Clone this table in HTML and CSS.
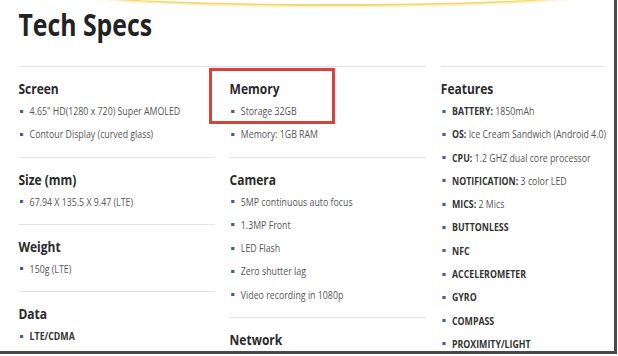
FILE: index.html
```html
<!DOCTYPE html>
<html lang="en">
<head>
    <meta charset="UTF-8">
    <meta name="viewport" content="width=device-width, initial-scale=1.0">
    <title>Tech Specs</title>
    <link rel="stylesheet" href="styles.css">
</head>
<body>

    <div class="frame">
        <!-- Reflejo amarillo de arriba -->
        <div class="glow"></div>

        <div class="page">
            <h1 class="title">Tech Specs</h1>

            <div class="specs">
                <div class="pair">
                    <div class="col">
                        <section class="spec">
                            <h2>Screen</h2>
                            <ul>
                                <li>4.65" HD(1280 x 720) Super AMOLED</li>
                                <li>Contour Display (curved glass)</li>
                            </ul>
                        </section>
                        <section class="spec">
                            <h2>Size (mm)</h2>
                            <ul>
                                <li>67.94 X 135.5 X 9.47 (LTE)</li>
                            </ul>
                        </section>
                        <section class="spec">
                            <h2>Weight</h2>
                            <ul>
                                <li>150g (LTE)</li>
                            </ul>
                        </section>
                        <section class="spec">
                            <h2>Data</h2>
                            <ul>
                                <li><strong>LTE/CDMA</strong></li>
                            </ul>
                        </section>
                    </div>

                    <div class="col">
                        <section class="spec">
                            <h2>Memory</h2>
                            <ul>
                                <li>Storage 32GB</li>
                                <li>Memory: 1GB RAM</li>
                            </ul>
                        </section>
                        <section class="spec">
                            <h2>Camera</h2>
                            <ul>
                                <li>5MP continuous auto focus</li>
                                <li>1.3MP Front</li>
                                <li>LED Flash</li>
                                <li>Zero shutter lag</li>
                                <li>Video recording in 1080p</li>
                            </ul>
                        </section>
                        <section class="spec">
                            <h2>Network</h2>
                        </section>
                    </div>
                </div>

                <div class="col features">
                    <section class="spec">
                        <h2>Features</h2>
                        <ul>
                            <li><strong>BATTERY:</strong> 1850mAh</li>
                            <li><strong>OS:</strong> Ice Cream Sandwich (Android 4.0)</li>
                            <li><strong>CPU:</strong> 1.2 GHZ dual core processor</li>
                            <li><strong>NOTIFICATION:</strong> 3 color LED</li>
                            <li><strong>MICS:</strong> 2 Mics</li>
                            <li><strong>BUTTONLESS</strong></li>
                            <li><strong>NFC</strong></li>
                            <li><strong>ACCELEROMETER</strong></li>
                            <li><strong>GYRO</strong></li>
                            <li><strong>COMPASS</strong></li>
                            <li><strong>PROXIMITY/LIGHT</strong></li>
                        </ul>
                    </section>
                </div>
            </div>
        </div>

        <!-- Recuadro rojo sobre Memory -->
        <div class="highlight"></div>
    </div>

</body>
</html>
```

FILE: styles.css
```css
/* Estilos generales */
* {
    box-sizing: border-box;
}

body {
    margin: 0;
    padding: 0;
    background-color: #fff;
    font-family: "Open Sans", "Noto Sans", Arial, sans-serif;
}

.frame {
    position: relative;
    width: 617px;
    height: 354px;
    border-right: 3px solid #4a4a4a;
    border-bottom: 3px solid #4a4a4a;
    background-color: #fff;
    overflow: hidden;
}

.glow {
    position: absolute;
    top: -24px;
    left: 63px;
    width: 540px;
    height: 30px;
    border-radius: 50%;
    border-bottom: 2px solid #f1da6c;
    box-shadow: 0 1px 2px rgba(240, 214, 100, 0.5);
}

.highlight {
    position: absolute;
    top: 68px;
    left: 209px;
    width: 126px;
    height: 56px;
    border: 3px solid #d8433b;
}

/* la captura original estaba comprimida a lo ancho */
.page {
    width: 766px;
    padding-left: 23px;
    transform: scaleX(0.8);
    transform-origin: 0 0;
}

.title {
    margin: 6px 0 24px;
    font-size: 31px;
    line-height: 36px;
    font-weight: bold;
    color: #222;
}

.specs {
    display: flex;
    gap: 19px;
    align-items: flex-start;
}

.pair {
    display: grid;
    grid-template-columns: 245px 245px;
    column-gap: 19px;
    width: 509px;
    border-top: 1px solid #e3e3e3;
}

.features {
    width: 206px;
    border-top: 1px solid #e3e3e3;
}

.spec {
    padding: 11px 0 11px;
}

.spec + .spec {
    border-top: 1px solid #e3e3e3;
}

.spec h2 {
    margin: 0;
    font-size: 15px;
    line-height: 20px;
    font-weight: bold;
    color: #2a2a2a;
}

.spec ul {
    list-style: none;
    margin: 1px 0 0;
    padding: 0;
}

.spec li {
    position: relative;
    padding-left: 14px;
    font-size: 11px;
    line-height: 23.3px;
    color: #555;
    white-space: nowrap;
}

.spec li::before {
    content: "";
    position: absolute;
    left: 2px;
    top: 10.5px;
    width: 4px;
    height: 3px;
    background-color: #3d5cb6;
}

.spec li strong {
    color: #333;
}
```
